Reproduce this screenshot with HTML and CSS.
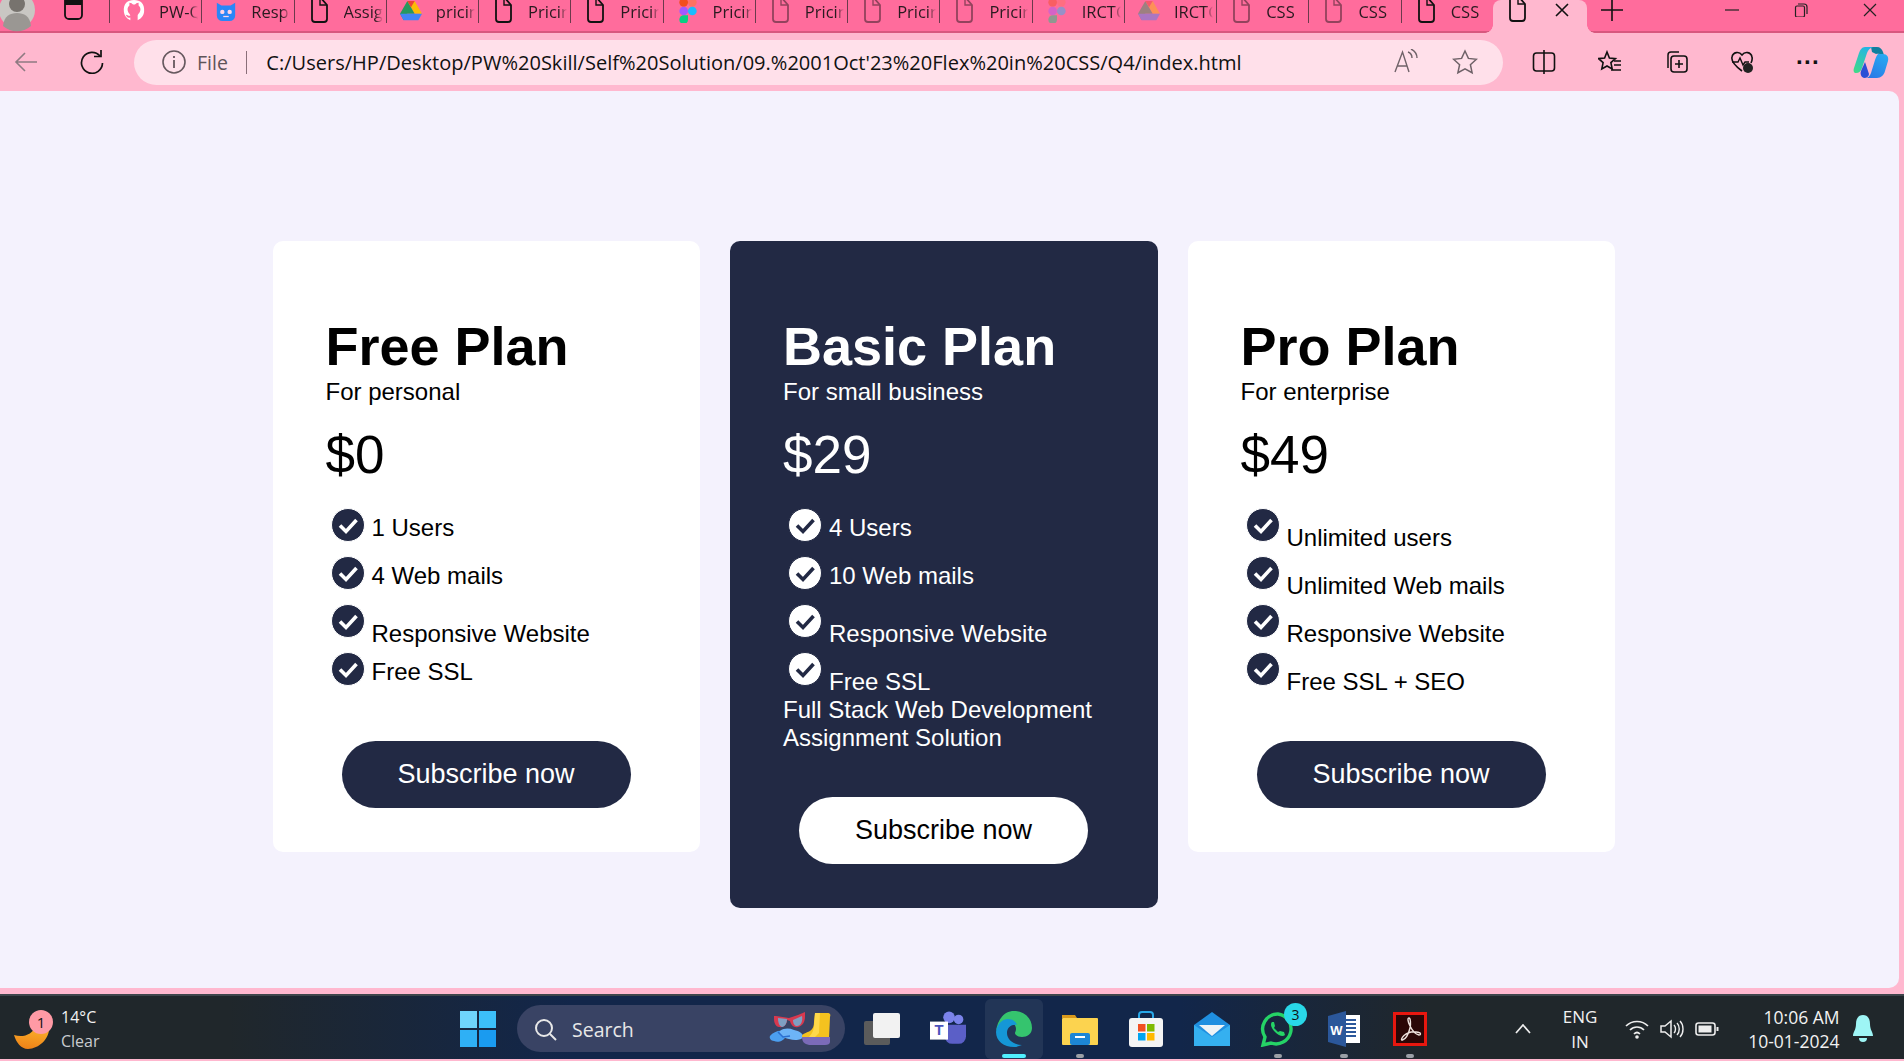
FILE: index.html
```html
<!DOCTYPE html>
<html lang="en">
<head>
<meta charset="utf-8">
<title>Pricing</title>
<link rel="stylesheet" href="styles.css">
</head>
<body>
<svg class="defs" width="0" height="0" aria-hidden="true">
  <defs>
    <linearGradient id="cop-l" x1="0.7" y1="0" x2="0.2" y2="1"><stop offset="0" stop-color="#22b4e6"/><stop offset="1" stop-color="#3fd98a"/></linearGradient>
    <linearGradient id="cop-r" x1="0.8" y1="0" x2="0.2" y2="1"><stop offset="0" stop-color="#27a9f2"/><stop offset="1" stop-color="#2a78e6"/></linearGradient>
    <linearGradient id="moon-g" x1="0.6" y1="0" x2="0.4" y2="1"><stop offset="0" stop-color="#fcb52c"/><stop offset="1" stop-color="#ee8218"/></linearGradient>
  </defs>
  <symbol id="doc" viewBox="0 0 20 26"><path d="M3 0v21a3 3 0 0 0 3 3h9a3 3 0 0 0 3-3V7l-7-8" fill="none" stroke="currentColor" stroke-width="1.8"/><path d="M11 -1v8h7" fill="none" stroke="currentColor" stroke-width="1.4"/></symbol>
  <symbol id="drive" viewBox="0 0 24 22"><path d="M8 0h8l8 14h-8z" fill="#fbbc04"/><path d="M8 0l8 14H8l-4 7-4-7z" fill="#0f9d58" opacity=".9"/><path d="M0 14h24l-4 7H4z" fill="#4285f4"/><path d="M8 0h8l-4 7z" fill="#ea4335"/></symbol>
  <symbol id="figma" viewBox="0 0 16 24"><circle cx="4" cy="4" r="4" fill="#f24e1e"/><circle cx="12" cy="4" r="4" fill="#ff7262"/><circle cx="4" cy="12" r="4" fill="#a259ff"/><circle cx="12" cy="12" r="4" fill="#1abcfe"/><path d="M4 16h4v4a4 4 0 1 1-4-4z" fill="#0acf83"/></symbol>
  <symbol id="check" viewBox="0 0 34 34"><circle cx="17" cy="17" r="16.5" fill="currentColor"/><path class="tick" d="M9 17.5l6 6L25.5 12" fill="none" stroke-width="3.6"/></symbol>
</svg>

<div class="browser">
  <div class="tabbar">
    <div class="tab-lead">
      <svg class="avatar" viewBox="0 0 36 36"><circle cx="18" cy="14" r="18" fill="#c9c7c3"/><circle cx="18" cy="8" r="8" fill="#77736e"/><path d="M4 30c1-10 7-13 14-13s13 3 14 13c-8 7-20 7-28 0z" fill="#9a9793"/></svg>
      <svg class="side-ic" viewBox="0 0 21 22"><path d="M2 0v17a4 4 0 0 0 4 4h9a4 4 0 0 0 4-4V0" fill="none" stroke="#111" stroke-width="1.8"/><rect x="2" y="0" width="17" height="7" fill="#111"/></svg>
    </div>
    <div class="tab">
      <svg class="tab-ic" viewBox="0 0 24 24"><path d="M12 0C5 0 0 4 1 13c1 6 5 8 7 9v-3c-3 1-4-1-5-3 2 0 3 2 5 1 0-2-3-3-3-7 0-2 1-3 2-4V3c2 0 3 1 4 2h2c1-1 2-2 4-2v3c1 1 2 2 2 4 0 4-3 5-3 7v5c2-1 6-3 7-9 1-9-4-13-11-13z" fill="#fff"/></svg>
      <span class="tab-label">PW-Q4</span>
    </div>
    <div class="tab">
      <svg class="tab-ic" viewBox="0 0 24 24"><path d="M2 3l5 3h10l5-3v14a6 6 0 0 1-6 6H8a6 6 0 0 1-6-6z" fill="#2a86f7"/><circle cx="8" cy="13" r="2.4" fill="#ffd6e6"/><circle cx="16" cy="13" r="2.4" fill="#ffd6e6"/><path d="M9 18h6" stroke="#ffd6e6" stroke-width="1.4"/></svg>
      <span class="tab-label">Responsive</span>
    </div>
    <div class="tab"><svg class="tab-ic"><use href="#doc"/></svg><span class="tab-label">Assignment</span></div>
    <div class="tab"><svg class="tab-ic"><use href="#drive"/></svg><span class="tab-label">pricing</span></div>
    <div class="tab"><svg class="tab-ic"><use href="#doc"/></svg><span class="tab-label">Pricing</span></div>
    <div class="tab"><svg class="tab-ic"><use href="#doc"/></svg><span class="tab-label">Pricing</span></div>
    <div class="tab"><svg class="tab-ic"><use href="#figma"/></svg><span class="tab-label">Pricing</span></div>
    <div class="tab faded"><svg class="tab-ic"><use href="#doc"/></svg><span class="tab-label">Pricing</span></div>
    <div class="tab faded"><svg class="tab-ic"><use href="#doc"/></svg><span class="tab-label">Pricing</span></div>
    <div class="tab faded"><svg class="tab-ic"><use href="#doc"/></svg><span class="tab-label">Pricing</span></div>
    <div class="tab faded"><svg class="tab-ic"><use href="#figma"/></svg><span class="tab-label">IRCTC</span></div>
    <div class="tab faded"><svg class="tab-ic"><use href="#drive"/></svg><span class="tab-label">IRCTC</span></div>
    <div class="tab faded"><svg class="tab-ic"><use href="#doc"/></svg><span class="tab-label">CSS</span></div>
    <div class="tab faded"><svg class="tab-ic"><use href="#doc"/></svg><span class="tab-label">CSS</span></div>
    <div class="tab"><svg class="tab-ic"><use href="#doc"/></svg><span class="tab-label">CSS</span></div>
    <div class="tab-active">
      <svg class="tab-ic"><use href="#doc"/></svg>
      <svg class="win-ic" viewBox="0 0 14 14"><path d="M1 1l12 12M13 1L1 13" stroke="#111" stroke-width="1.6"/></svg>
    </div>
    <svg class="plus" viewBox="0 0 22 22"><path d="M11 0v22M0 11h22" stroke="#111" stroke-width="1.6"/></svg>
    <div class="win-controls">
      <svg class="win-ic" viewBox="0 0 14 14"><path d="M0 7h14" stroke="#222" stroke-width="1.2"/></svg>
      <svg class="win-ic" viewBox="0 0 14 14"><rect x="1.5" y="3" width="9" height="11" rx="1.5" fill="none" stroke="#222" stroke-width="1.2"/><path d="M4 1h6a3 3 0 0 1 3 3v7" fill="none" stroke="#222" stroke-width="1.2"/></svg>
      <svg class="win-ic" viewBox="0 0 14 14"><path d="M1 1l12 12M13 1L1 13" stroke="#222" stroke-width="1.2"/></svg>
    </div>
  </div>

  <div class="toolbar">
    <svg class="nav-ic back" viewBox="0 0 24 24"><path d="M23 12H2M11 3l-9 9 9 9" fill="none" stroke="#8f7a82" stroke-width="1.6"/></svg>
    <svg class="nav-ic reload" viewBox="0 0 24 24"><path d="M20 6a10.5 10.5 0 1 0 2.5 7" fill="none" stroke="#111" stroke-width="1.7"/><path d="M14 6.500h7V0" fill="none" stroke="#111" stroke-width="1.7"/></svg>
    <div class="address">
      <svg class="info" viewBox="0 0 24 24"><circle cx="12" cy="12" r="11" fill="none" stroke="#66585e" stroke-width="1.6"/><path d="M12 10v8M12 6v2" stroke="#66585e" stroke-width="1.8"/></svg>
      <span class="file">File</span>
      <span class="addr-sep"></span>
      <span class="url">C:/Users/HP/Desktop/PW%20Skill/Self%20Solution/09.%2001Oct'23%20Flex%20in%20CSS/Q4/index.html</span>
      <svg class="addr-ic" viewBox="0 0 26 26"><path d="M2 23L9.500 3 16 23M4.500 17h10" fill="none" stroke="#6f6268" stroke-width="1.4"/><path d="M15 3c3 1 4 3 4 6M18 0c4 2 6 5 6 9" fill="none" stroke="#6f6268" stroke-width="1.4"/></svg>
      <svg class="addr-ic" viewBox="0 0 26 26"><path d="M13 2l3.400 7.400 8 .9-6 5.400 1.700 8L13 19.800 5.900 23.700l1.700-8-6-5.400 8-.9z" fill="none" stroke="#6f6268" stroke-width="1.5"/></svg>
    </div>
    <div class="tools">
      <svg class="tool-ic" viewBox="0 0 24 24"><rect x="1.500" y="3" width="21" height="18" rx="3" fill="none" stroke="#111" stroke-width="1.6"/><path d="M12 0v24" stroke="#111" stroke-width="1.6"/></svg>
      <svg class="tool-ic" viewBox="0 0 24 24"><path d="M9 2l2.400 6 6 .6-4.500 4 1.300 6.400L9 16l-5.200 3 1.300-6.400-4.500-4 6-.6z" fill="none" stroke="#111" stroke-width="1.6"/><path d="M16 11h7M16 15h7M13 20h10" stroke="#111" stroke-width="1.6"/></svg>
      <svg class="tool-ic" viewBox="0 0 24 24"><path d="M4 18V5a3 3 0 0 1 3-3h8" fill="none" stroke="#111" stroke-width="1.5"/><rect x="7" y="6" width="16" height="16" rx="3" fill="none" stroke="#111" stroke-width="1.6"/><path d="M15 10v8M11 14h8" stroke="#111" stroke-width="1.6"/></svg>
      <svg class="tool-ic" viewBox="0 0 24 24"><path d="M12 21C4 15 1 11 2 7c1-5 7-6 10-2 3-4 9-3 10 2 .5 2 0 4-1 6" fill="none" stroke="#111" stroke-width="1.6"/><path d="M2 12h6l2-4 3 7 2-3h4" fill="none" stroke="#111" stroke-width="1.400"/><circle cx="18" cy="18" r="5" fill="#222"/></svg>
      <span class="dots">···</span>
      <svg class="copilot" viewBox="0 0 36 33">
        <path d="M18 1h6c3 0 5 2 6 5l2 6c-2-3-5-5-9-4l-4-2z" fill="#0f7f9f"/>
        <path d="M12 1h8c-3 1-5 3-6 6L9 22c-1 3-3 5-6 5-2 0-3-2-2-5L6 7c1-3 3-6 6-6z" fill="url(#cop-l)"/>
        <path d="M25 8h5c4 0 6 3 5 7l-3 10c-1 4-4 7-8 7H12c3 0 5-2 6-5l4-13c1-3 2-5 3-6z" fill="url(#cop-r)"/>
        <path d="M8 25l4-9 4 12c0 2-2 4-5 4-3-1-4-4-3-7z" fill="#2a4fd6"/>
      </svg>
    </div>
  </div>

  <div class="viewport">
    <main class="plans">
      <section class="card">
        <h1 class="plan-name">Free Plan</h1>
        <p class="plan-for">For personal</p>
        <p class="price">$0</p>
        <ul class="features">
          <li class="feat"><svg class="tick-ic"><use href="#check"/></svg><span class="mid">1 Users</span></li>
          <li class="feat"><svg class="tick-ic"><use href="#check"/></svg><span class="mid">4 Web mails</span></li>
          <li class="feat"><svg class="tick-ic"><use href="#check"/></svg><span class="low">Responsive Website</span></li>
          <li class="feat"><svg class="tick-ic"><use href="#check"/></svg><span class="mid">Free SSL</span></li>
        </ul>
        <button class="cta">Subscribe now</button>
      </section>

      <section class="card dark">
        <h1 class="plan-name">Basic Plan</h1>
        <p class="plan-for">For small business</p>
        <p class="price">$29</p>
        <ul class="features">
          <li class="feat"><svg class="tick-ic"><use href="#check"/></svg><span class="mid">4 Users</span></li>
          <li class="feat"><svg class="tick-ic"><use href="#check"/></svg><span class="mid">10 Web mails</span></li>
          <li class="feat"><svg class="tick-ic"><use href="#check"/></svg><span class="low">Responsive Website</span></li>
          <li class="feat"><svg class="tick-ic"><use href="#check"/></svg><span class="low">Free SSL</span></li>
        </ul>
        <p class="extra">Full Stack Web Development Assignment Solution</p>
        <button class="cta">Subscribe now</button>
      </section>

      <section class="card">
        <h1 class="plan-name">Pro Plan</h1>
        <p class="plan-for">For enterprise</p>
        <p class="price">$49</p>
        <ul class="features">
          <li class="feat"><svg class="tick-ic"><use href="#check"/></svg><span class="low">Unlimited users</span></li>
          <li class="feat"><svg class="tick-ic"><use href="#check"/></svg><span class="low">Unlimited Web mails</span></li>
          <li class="feat"><svg class="tick-ic"><use href="#check"/></svg><span class="low">Responsive Website</span></li>
          <li class="feat"><svg class="tick-ic"><use href="#check"/></svg><span class="low">Free SSL + SEO</span></li>
        </ul>
        <button class="cta">Subscribe now</button>
      </section>
    </main>
  </div>

  <footer class="taskbar">
    <div class="weather">
      <svg class="moon" viewBox="0 0 36 24"><path d="M0 10c9 3 18 0 23-10h12c2 12-9 24-21 24C7 24 2 17 0 10z" fill="url(#moon-g)"/></svg>
      <span class="badge">1</span>
      <div class="weather-text"><span>14°C</span><span class="dim">Clear</span></div>
    </div>
    <div class="slot">
      <svg class="win-logo" viewBox="0 0 36 36"><rect width="17" height="17" fill="#6fd4fb"/><rect x="19" width="17" height="17" fill="#3cc0fa"/><rect y="19" width="17" height="17" fill="#2fb0f5"/><rect x="19" y="19" width="17" height="17" fill="#1a9bf0"/></svg>
    </div>
    <div class="search">
      <svg class="search-ic" viewBox="0 0 24 24"><circle cx="10" cy="10" r="8" fill="none" stroke="#e8e8e8" stroke-width="2"/><path d="M16 16l6 6" stroke="#e8e8e8" stroke-width="2"/></svg>
      <span class="search-text">Search</span>
      <svg class="search-art" viewBox="0 0 64 35">
        <path d="M7 5l13 2 9-3 7-3v5c0 4-2 9-7 10-4 1-7-2-8-6l-3-1c0 4-3 8-8 7-3 0-5-4-5-8V5z" fill="#d8394f"/>
        <path d="M9 7l9 1c0 4-2 8-5 8-3-1-4-5-4-9zM24 9l9-4c1 5-1 10-5 10-2 0-4-2-4-6z" fill="#7f9fc2"/>
        <path d="M1 25c3-4 9-6 13-5 3 1 4 3 3 5-2 5-8 7-12 5-3 0-5-3-4-5z" fill="#4c9ff0"/>
        <path d="M11 20c4-3 9-3 14-1 5 1 10 4 9 7-1 3-8 4-14 2-6-1-10-5-9-8z" fill="#6db4f7"/>
        <path d="M9 21l5 5 7-1" fill="none" stroke="#2b6fd0" stroke-width="1.500"/>
        <path d="M46 2h12c3 0 4 1 3 4l-1 22H38c-2 0-5 0-5-3 0-2 4-3 8-5 3-2 4-5 4-9z" fill="#f4c21f"/>
        <path d="M46 2h5l-1 20-6 6h-6c3-3 6-6 7-12z" fill="#ffd84a"/>
        <path d="M33 26h28v5c0 2-2 3-5 3H42c-5 0-9-2-9-8z" fill="#7b6bb8"/>
      </svg>
    </div>
    <div class="slot">
      <svg class="app" viewBox="0 0 36 32"><rect y="8" width="26" height="24" rx="2" fill="#5b5b5b"/><rect x="9" width="27" height="25" rx="2" fill="#f2f2f2"/></svg>
    </div>
    <div class="slot">
      <svg class="app" viewBox="0 0 34 34"><circle cx="27" cy="8" r="4.500" fill="#7b83eb"/><circle cx="18" cy="6" r="5.500" fill="#7b83eb"/><path d="M14 13h20v11a7 7 0 0 1-7 7h-6a7 7 0 0 1-7-7z" fill="#5b5fc7"/><rect y="10" width="17" height="17" fill="#fff"/><text class="teams-t" x="8.500" y="23">T</text></svg>
    </div>
    <div class="slot active-slot">
      <svg class="app" viewBox="0 0 36 36"><path d="M18 0c10 0 18 7 18 17 0 6-5 9-10 9-4 0-7-2-7-4 0-1 1-2 1-4 0-4-3-7-8-7-6 0-11 5-12 10C1 9 8 0 18 0z" fill="#35c46e"/><path d="M0 21C1 12 7 8 12 8c5 0 8 3 9 6-5-1-10 2-10 8 0 6 6 12 15 12-3 1-5 2-8 2C8 36 0 30 0 21z" fill="#1597d6"/></svg>
      <span class="running"></span>
    </div>
    <div class="slot">
      <svg class="app" viewBox="0 0 36 32"><path d="M0 2h13l2 3h-15z" fill="#d9991c"/><rect y="5" width="36" height="27" rx="1" fill="#fcd34f"/><rect x="8" y="20" width="20" height="12" rx="2" fill="#1d86d6"/><rect x="13" y="23" width="10" height="2" fill="#fff"/></svg>
      <span class="pin"></span>
    </div>
    <div class="slot">
      <svg class="app" viewBox="0 0 34 36"><path d="M10 8V4a3 3 0 0 1 3-3h8a3 3 0 0 1 3 3v4" fill="none" stroke="#29a8e8" stroke-width="2"/><rect y="7" width="34" height="29" rx="3" fill="#f4f4f4"/><rect x="9" y="13" width="7.500" height="7.500" fill="#f25022"/><rect x="18" y="13" width="7.500" height="7.500" fill="#7fba00"/><rect x="9" y="22" width="7.500" height="7.500" fill="#00a4ef"/><rect x="18" y="22" width="7.500" height="7.500" fill="#ffb900"/></svg>
    </div>
    <div class="slot">
      <svg class="app" viewBox="0 0 36 34"><path d="M18 0l18 13v21H0V13z" fill="#1f8fe0"/><path d="M5 13h26L18 24z" fill="#eef3f6"/><path d="M0 13l18 12 18-12v21H0z" fill="#35b0f0"/></svg>
    </div>
    <div class="slot">
      <svg class="app" viewBox="0 0 36 36"><path d="M18 3a15 15 0 0 0-13 23L3 34l8-2a15 15 0 1 0 7-29z" fill="none" stroke="#25d366" stroke-width="3.400"/><path d="M12 11c-2 2-1 6 3 10s8 5 10 3l-1-3-4-1-2 1-4-4 1-2-1-4z" fill="#25d366"/></svg>
      <span class="badge-wa">3</span>
      <span class="pin"></span>
    </div>
    <div class="slot">
      <svg class="app" viewBox="0 0 32 36"><rect x="10" y="4" width="22" height="28" fill="#fff"/><path d="M14 9h14M14 13h14M14 17h14M14 21h14M14 25h14" stroke="#2b579a" stroke-width="2"/><path d="M0 5l18-5v36L0 31z" fill="#2b579a"/><text class="word-t" x="8.500" y="24">W</text></svg>
      <span class="pin"></span>
    </div>
    <div class="slot">
      <svg class="app pdf" viewBox="0 0 34 34"><rect x="1.500" y="1.500" width="31" height="31" fill="#2b0606" stroke="#e8170f" stroke-width="3"/><path d="M16 6c-1.500 0-1.500 3 1 8 2.500 5 5 8 9 9 2 0 2-2 0-2.500-5-1.500-11-.5-15 3-3 3-3 5-1.500 4.500 3-1 6-6 7.500-12 1-4 .5-10-1-10z" fill="none" stroke="#efe2de" stroke-width="1.400"/></svg>
      <span class="pin"></span>
    </div>
    <div class="tray">
      <svg class="chevron" viewBox="0 0 16 10"><path d="M1 9l7-8 7 8" fill="none" stroke="#eee" stroke-width="1.700"/></svg>
      <div class="lang"><span>ENG</span><span>IN</span></div>
      <div class="status">
        <svg class="st-ic" viewBox="0 0 24 20"><path d="M1 7c6-6 16-6 22 0M5 11c4-4 10-4 14 0M9 15c2-2 4-2 6 0" fill="none" stroke="#eee" stroke-width="1.700"/><circle cx="12" cy="18" r="1.800" fill="#eee"/></svg>
        <svg class="st-ic" viewBox="0 0 24 20"><path d="M1 7h4l6-5v16l-6-5H1z" fill="none" stroke="#eee" stroke-width="1.500"/><path d="M14 6c2 2 2 6 0 8M17 4c3 3 3 9 0 12M20 2c4 4 4 12 0 16" fill="none" stroke="#eee" stroke-width="1.400"/></svg>
        <svg class="st-ic" viewBox="0 0 24 20"><rect x="1" y="4" width="19" height="12" rx="2.500" fill="none" stroke="#eee" stroke-width="1.600"/><rect x="3.500" y="6.500" width="13" height="7" fill="#eee"/><rect x="21.500" y="8" width="2" height="4" fill="#eee"/></svg>
      </div>
      <div class="clock"><span>10:06 AM</span><span>10-01-2024</span></div>
      <svg class="bell" viewBox="0 0 20 28"><path d="M10 0c5 0 7 4 7 9 0 6 3 8 3 12H0c0-4 3-6 3-12 0-5 2-9 7-9z" fill="#9ef5f5"/><path d="M6 23h8a4 4 0 0 1-8 0z" fill="#9ef5f5"/></svg>
    </div>
  </footer>
</div>
</body>
</html>
```

FILE: styles.css
```css
* { box-sizing: border-box; }
html, body { margin: 0; padding: 0; height: 100%; overflow: hidden; }
body { font-family: "Liberation Sans", Arial, sans-serif; color: #000; }
.defs { display: block; width: 0; height: 0; }
.browser { display: flex; flex-direction: column; width: 1904px; height: 1061px; background: #ffb8cf; }

/* tab strip */
.tabbar { display: flex; align-items: center; height: 33px; padding-bottom: 13px; background: #ff6c9c; box-shadow: inset 0 -2px 0 #d8587f; flex: none; overflow: hidden; font-family: "Open Sans", sans-serif; }
.tab-lead { display: flex; align-items: center; width: 109px; flex: none; }
.avatar { width: 36px; height: 36px; margin-top: 7px; margin-left: -1px; flex: none; }
.side-ic { width: 21px; height: 22px; margin-left: 28px; margin-top: -2px; flex: none; }
.tab { display: flex; align-items: center; gap: 14px; width: 92.270px; height: 24px; margin-top: 2px; padding-left: 13px; border-left: 1px solid #6b3a4c; flex: none; overflow: hidden; }
.tab-ic { width: 22px; height: 26px; flex: none; color: #111; }
.tab-label { width: 39px; overflow: hidden; white-space: nowrap; font-size: 16.500px; color: #2a1a20; flex: none; -webkit-mask-image: linear-gradient(90deg, #000 80%, transparent); mask-image: linear-gradient(90deg, #000 80%, transparent); }
.faded .tab-ic { opacity: .45; }
.tab-active { position: relative; display: flex; align-items: center; justify-content: space-between; width: 94px; height: 33px; margin-bottom: -13px; padding: 0 18px 13px 13px; background: #ffb8cf; border-radius: 8px 8px 0 0; flex: none; }
.tab-active::before, .tab-active::after { content: ""; position: absolute; bottom: 0; width: 8px; height: 8px; }
.tab-active::before { left: -8px; background: radial-gradient(circle at 0 0, transparent 7.500px, #ffb8cf 8px); }
.tab-active::after { right: -8px; background: radial-gradient(circle at 100% 0, transparent 7.500px, #ffb8cf 8px); }
.plus { width: 22px; height: 22px; margin-left: 14px; flex: none; }
.win-controls { display: flex; justify-content: space-between; align-items: center; margin-left: auto; width: 152px; margin-right: 27px; }
.win-ic { width: 14px; height: 14px; flex: none; }

/* toolbar */
.toolbar { display: flex; align-items: center; height: 58px; flex: none; }
.nav-ic { width: 24px; height: 24px; flex: none; }
.back { margin-left: 14px; }
.reload { margin-left: 42px; }
.address { display: flex; align-items: center; width: 1369px; height: 45px; margin-left: 30px; padding-left: 28px; border-radius: 23px; background: #ffe0ea; font-family: "Open Sans", sans-serif; flex: none; }
.info { width: 24px; height: 24px; flex: none; }
.file { margin-left: 11px; font-size: 19.500px; color: #5f5459; }
.addr-sep { width: 1.500px; height: 23px; margin-left: 18px; background: #8a6f79; flex: none; }
.url { margin-left: 19px; width: 976px; font-size: 20.050px; color: #111; white-space: nowrap; flex: none; }
.addr-ic { width: 26px; height: 26px; flex: none; }
.url + .addr-ic { margin-left: 151px; }
.addr-ic + .addr-ic { margin-left: 33px; }
.tools { display: flex; align-items: center; gap: 42px; margin-left: 29px; }
.tool-ic { width: 24px; height: 24px; flex: none; }
.dots { width: 24px; font-size: 24px; font-weight: 700; line-height: 1; text-align: center; color: #111; flex: none; }
.copilot { width: 36px; height: 33px; margin-left: -9px; flex: none; }

/* page */
.viewport { flex: none; height: 897px; width: 1899px; background: #f4f2fd; border-radius: 0 10px 10px 0; }
.plans { display: flex; align-items: flex-start; gap: 30px; padding: 150px 0 0 272.500px; }
.card { width: 427.500px; padding: 75px 0 44px 53px; background: #fff; border-radius: 10px; flex: none; }
.card.dark { background: #222944; color: #fff; }
.plan-name { margin: 0; font-size: 54px; line-height: 60px; font-weight: 700; }
.plan-for { margin: 2px 0 0; font-size: 24px; line-height: 28px; }
.price { margin: 19px 0 23px; font-size: 53px; line-height: 60px; }
.features { margin: 0; padding: 0 0 0 5px; list-style: none; }
.feat { display: flex; align-items: flex-start; gap: 7px; height: 48px; font-size: 24px; line-height: 28px; }
.tick-ic { width: 34px; height: 34px; flex: none; color: #222944; stroke: #fff; }
.dark .tick-ic { color: #fff; stroke: #222944; }
.mid { margin-top: 6px; }
.low { margin-top: 16px; }
.extra { width: 330px; margin: -4px 0 0; font-size: 24px; line-height: 28px; }
.cta { display: block; width: 289px; height: 67px; margin: 41px 0 0 16px; border: 0; border-radius: 34px; background: #222944; color: #fff; font: 27px/1 "Liberation Sans", Arial, sans-serif; }
.extra + .cta { margin-top: 45px; }
.dark .cta { background: #fff; color: #000; }

/* taskbar */
.taskbar { display: flex; align-items: center; height: 65px; margin-top: 6px; padding-top: 2px; border-top: 2px solid #3e454b; background: linear-gradient(90deg, #20272b 0, #20272b 12%, #12264a 30%, #12264a 62%, #20272b 75%, #20272b 100%); color: #f2f2f2; font-family: "Open Sans", sans-serif; flex: none; }
.weather { position: relative; display: flex; align-items: center; width: 445px; padding-left: 14px; flex: none; }
.moon { width: 36px; height: 24px; margin-top: 17px; flex: none; }
.badge { position: absolute; left: 29px; top: 5px; width: 24px; height: 24px; border-radius: 50%; background: #ff9aa5; color: #111; font-size: 15px; line-height: 24px; text-align: center; }
.weather-text { display: flex; flex-direction: column; margin-left: 11px; font-size: 16px; line-height: 24px; }
.dim { color: #c9cccf; }
.slot { position: relative; display: flex; align-items: center; justify-content: center; width: 66px; height: 61px; flex: none; }
.win-logo { width: 36px; height: 36px; }
.app { width: 36px; height: 36px; }
.pdf { width: 34px; height: 34px; }
.active-slot::before { content: ""; position: absolute; inset: 1px 4px 0; background: rgba(255,255,255,.07); border-radius: 6px; }
.active-slot .app { position: relative; }
.running { position: absolute; left: 21px; bottom: 1px; width: 24px; height: 4px; border-radius: 2px; background: #4ff0ff; }
.pin { position: absolute; left: 29px; bottom: 1px; width: 8px; height: 4px; border-radius: 2px; background: #9a9fa6; }
.search { display: flex; align-items: center; width: 328px; height: 47px; margin: 0 4px 0 6px; padding-left: 17px; border-radius: 24px; background: #394364; flex: none; }
.search-ic { width: 24px; height: 24px; margin-top: 2px; flex: none; }
.search-text { margin-top: 2px; margin-left: 14px; font-size: 19.500px; color: #e8e8e8; }
.search-art { width: 64px; height: 35px; margin-left: auto; margin-right: 12px; flex: none; }
.teams-t { font: 700 14px "Liberation Sans", sans-serif; fill: #4b53bc; text-anchor: middle; }
.word-t { font: 700 13px "Liberation Sans", sans-serif; fill: #fff; text-anchor: middle; }
.badge-wa { position: absolute; left: 39px; top: 5px; width: 23px; height: 23px; border-radius: 50%; background: #29d8e8; color: #111; font-size: 14px; line-height: 23px; text-align: center; }
.tray { display: flex; align-items: center; margin-left: 72px; flex: 1; }
.chevron { width: 16px; height: 10px; flex: none; }
.lang { display: flex; flex-direction: column; align-items: center; width: 50px; margin-left: 24px; font-size: 17px; line-height: 25px; }
.status { display: flex; gap: 11px; margin-left: 20px; }
.st-ic { width: 24px; height: 20px; }
.clock { display: flex; flex-direction: column; align-items: flex-end; width: 110px; margin-left: 10.500px; font-size: 17.500px; line-height: 24px; }
.bell { width: 20px; height: 28px; margin-left: 13px; flex: none; }
```
